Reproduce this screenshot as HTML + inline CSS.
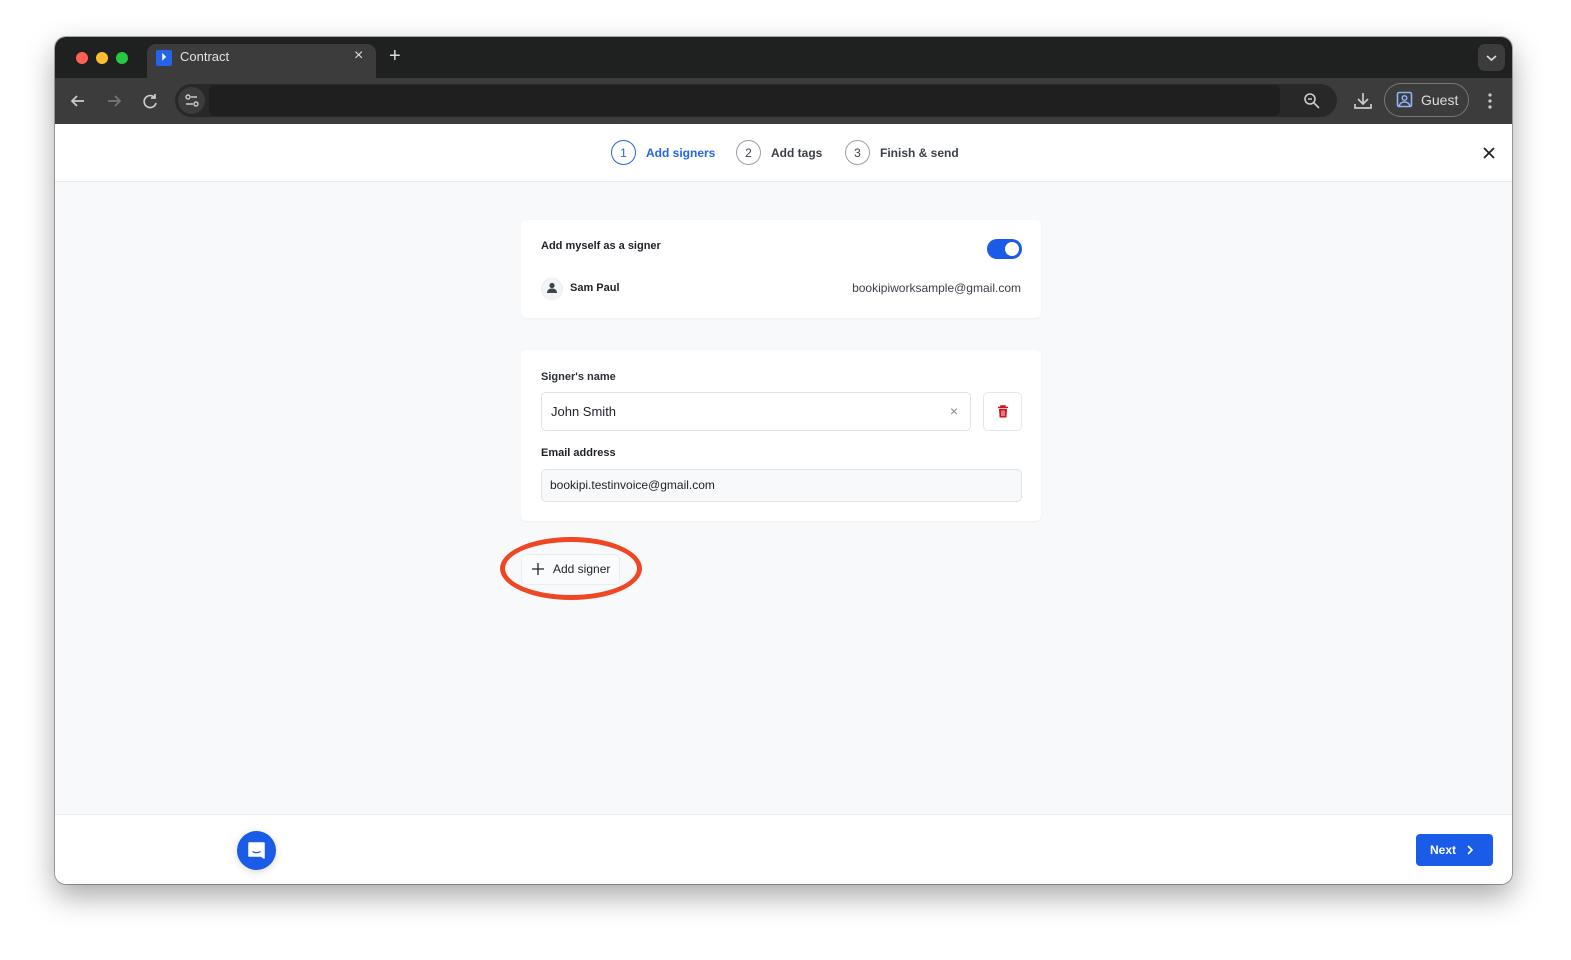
<!DOCTYPE html>
<html><head><meta charset="utf-8"><style>
*{box-sizing:border-box;margin:0;padding:0}
body{width:1571px;height:960px;background:#fff;font-family:"Liberation Sans",Arial,sans-serif;position:relative;overflow:hidden}
.win{position:absolute;left:55px;top:37px;width:1457px;height:847px;border-radius:11px;overflow:hidden;background:#f8f9fb;box-shadow:0 12px 30px rgba(0,0,0,.35),0 0 0 1px rgba(0,0,0,.3)}
.tabs{position:absolute;left:0;top:0;width:100%;height:41px;background:#1f2020}
.dot{position:absolute;top:15px;width:12px;height:12px;border-radius:50%}
.tab{position:absolute;left:92px;top:7px;width:229px;height:36px;background:#3c3c3c;border-radius:9px 9px 0 0}
.tool{position:absolute;left:0;top:41px;width:100%;height:46px;background:#3c3c3c}
.addr{position:absolute;left:120px;top:6px;width:1162px;height:33px;border-radius:17px;background:#282828}
.addr .in{position:absolute;left:34px;top:1px;right:57px;height:31px;background:#1f1f1f;border-radius:6px}
.content{position:absolute;left:0;top:87px;width:100%;height:760px}
.hdr{position:absolute;left:0;top:0;width:100%;height:58px;background:#fff;border-bottom:1px solid #ebedf0}
.step{position:absolute;top:16px;display:flex;align-items:center;font-size:12px;font-weight:bold;color:#3a3f47}
.step .c{width:25px;height:25px;border:1px solid #9aa0a8;border-radius:50%;display:flex;align-items:center;justify-content:center;margin-right:10px;font-size:12px;font-weight:normal}
.card{position:absolute;left:466px;width:520px;background:#fff;border-radius:6px;box-shadow:0 1px 2px rgba(0,0,0,.04)}
.lbl{position:absolute;font-size:11px;font-weight:bold;color:#1d2127}
.foot{position:absolute;left:0;top:690px;width:100%;height:70px;background:#fff;border-top:1px solid #eceef1}
</style></head><body>
<div class="win">
 <div class="tabs">
  <div class="dot" style="left:21px;background:#fe5f57"></div>
  <div class="dot" style="left:41px;background:#febc2e"></div>
  <div class="dot" style="left:61px;background:#28c840"></div>
  <div class="tab">
   <div style="position:absolute;left:9px;top:6px;width:16px;height:16px;background:#2563eb;border-radius:2px;color:#fff;font-size:10px;font-weight:bold;text-align:center;line-height:16px">&#x1F782;</div>
   <div style="position:absolute;left:33px;top:5px;color:#e3e3e3;font-size:13px">Contract</div>
   <div style="position:absolute;left:207px;top:3px;color:#ddd;font-size:16px">×</div>
  </div>
  <div style="position:absolute;left:334px;top:8px;color:#ddd;font-size:20px">+</div>
  <div style="position:absolute;left:1423px;top:7px;width:27px;height:27px;border-radius:7px;background:#3c3c3c"><svg width="27" height="27"><path d="M9 12l4.5 4 4.5-4" stroke="#ddd" stroke-width="1.6" fill="none"/></svg></div>
 </div>
 <div class="tool">
  <svg style="position:absolute;left:12px;top:12px" width="22" height="22"><path d="M17 11H5M10 6l-5 5 5 5" stroke="#ccc" stroke-width="1.7" fill="none"/></svg>
  <svg style="position:absolute;left:48px;top:12px" width="22" height="22"><path d="M5 11h12M12 6l5 5-5 5" stroke="#777" stroke-width="1.7" fill="none"/></svg>
  <svg style="position:absolute;left:84px;top:12px" width="22" height="22"><path d="M16 8a6 6 0 1 0 1 5M16 4v4h-4" stroke="#ccc" stroke-width="1.7" fill="none"/></svg>
  <div class="addr"><div style="position:absolute;left:3px;top:3px;width:27px;height:27px;border-radius:50%;background:#3c3c3c"></div>
   <svg style="position:absolute;left:6px;top:6px" width="22" height="22"><circle cx="7" cy="7" r="2" stroke="#ccc" fill="none" stroke-width="1.4"/><path d="M10 7h6M5 14h7" stroke="#ccc" stroke-width="1.4"/><circle cx="15" cy="14" r="2" stroke="#ccc" fill="none" stroke-width="1.4"/></svg>
   <div class="in"></div>
   <svg style="position:absolute;left:1128px;top:8px" width="18" height="18"><circle cx="7" cy="7" r="5" stroke="#ccc" fill="none" stroke-width="1.6"/><path d="M11 11l5 5M5 7h4" stroke="#ccc" stroke-width="1.6"/></svg>
  </div>
  <svg style="position:absolute;left:1297px;top:12px" width="22" height="22"><path d="M11 3v11M6 9l5 5 5-5M3 14v4h16v-4" stroke="#ccc" stroke-width="1.7" fill="none"/></svg>
  <div style="position:absolute;left:1329px;top:5px;width:85px;height:34px;border:1px solid #777;border-radius:17px;color:#ddd;font-size:14px;line-height:32px;padding-left:36px">Guest</div>
  <svg style="position:absolute;left:1341px;top:13px" width="18" height="18"><rect x="1.5" y="1.5" width="14" height="14" rx="1.5" stroke="#8ab4f8" fill="none" stroke-width="1.6"/><circle cx="8.5" cy="7" r="2.3" stroke="#8ab4f8" fill="none" stroke-width="1.5"/><path d="M3 15c1-3 3-4 5.5-4s4.5 1 5.5 4" stroke="#8ab4f8" fill="none" stroke-width="1.5"/></svg>
  <svg style="position:absolute;left:1428px;top:12px" width="14" height="22"><circle cx="7" cy="5" r="1.6" fill="#ccc"/><circle cx="7" cy="11" r="1.6" fill="#ccc"/><circle cx="7" cy="17" r="1.6" fill="#ccc"/></svg>
 </div>
 <div class="content">
  <div class="hdr">
   <div class="step" style="left:556px;color:#2563eb"><div class="c" style="border-color:#2563eb;color:#2563eb">1</div>Add signers</div>
   <div class="step" style="left:681px"><div class="c">2</div>Add tags</div>
   <div class="step" style="left:790px"><div class="c">3</div>Finish &amp; send</div>
   <svg style="position:absolute;left:1427px;top:22px" width="14" height="14"><path d="M2 2l10 10M12 2L2 12" stroke="#222" stroke-width="1.8"/></svg>
  </div>
  <div class="card" style="top:96px;height:98px">
   <div class="lbl" style="left:20px;top:20px">Add myself as a signer</div>
   <div style="position:absolute;left:466px;top:19px;width:35px;height:20px;border-radius:10px;background:#1a5ce8"><div style="position:absolute;right:3px;top:3px;width:14px;height:14px;border-radius:50%;background:#fff"></div></div>
   <div style="position:absolute;left:20px;top:58px;width:22px;height:22px;border-radius:50%;background:#f3f4f6;border:1px solid #eee"></div>
   <svg style="position:absolute;left:25px;top:62px" width="12" height="12"><circle cx="6" cy="3.5" r="2.6" fill="#3f444c"/><path d="M1 11c0-3 2-4.5 5-4.5s5 1.5 5 4.5z" fill="#3f444c"/></svg>
   <div class="lbl" style="left:49px;top:62px">Sam Paul</div>
   <div style="position:absolute;right:20px;top:61px;font-size:12px;color:#3a3f47">bookipiworksample@gmail.com</div>
  </div>
  <div class="card" style="top:226px;height:171px">
   <div class="lbl" style="left:20px;top:21px;color:#2a2e35">Signer's name</div>
   <div style="position:absolute;left:20px;top:42px;width:430px;height:39px;border:1px solid #dfe2e6;border-radius:5px;font-size:13px;color:#1d2127;line-height:37px;padding-left:9px">John Smith<span style="position:absolute;right:12px;top:0;color:#888;font-size:14px">×</span></div>
   <div style="position:absolute;left:462px;top:42px;width:39px;height:39px;border:1px solid #e5e7ea;border-radius:5px"></div>
   <svg style="position:absolute;left:476px;top:55px" width="12" height="13"><path d="M1 2.5h10M4 2.5V1h4v1.5" stroke="#d0121b" stroke-width="1.6" fill="none"/><path d="M2 4h8l-.6 8.5H2.6z" fill="#d0121b"/><path d="M5 5.5v5.5M7 5.5v5.5" stroke="#fff" stroke-width="0.9"/></svg>
   <div class="lbl" style="left:20px;top:97px">Email address</div>
   <div style="position:absolute;left:20px;top:119px;width:481px;height:33px;border:1px solid #dfe2e6;border-radius:5px;background:#f8f9fb;font-size:12px;color:#1d2127;line-height:31px;padding-left:8px">bookipi.testinvoice@gmail.com</div>
  </div>
  <div style="position:absolute;left:466px;top:430px;width:99px;height:31px;border:1px solid #ebedf0;border-radius:5px;background:#fafbfc;font-size:12px;color:#1d2127;line-height:29px;padding-left:31px">Add signer</div>
  <svg style="position:absolute;left:477px;top:439px" width="12" height="12"><path d="M6 0v12M0 6h12" stroke="#222" stroke-width="1.3"/></svg>
  <div style="position:absolute;left:445px;top:413px;width:142px;height:63px;border:5px solid #ef4623;border-radius:50%"></div>
  <div class="foot">
   <div style="position:absolute;left:182px;top:16px;width:39px;height:39px;border-radius:50%;background:#1a5ce8;box-shadow:0 2px 8px rgba(0,0,0,.15)"></div>
   <svg style="position:absolute;left:192px;top:26px" width="19" height="19"><path d="M2 2h15v15l-3-2H2z" fill="#fff" stroke="#fff" stroke-linejoin="round" stroke-width="1.5"/><path d="M5.5 10.5c2 1.5 6 1.5 8 0" stroke="#1a5ce8" stroke-width="1.3" fill="none"/></svg>
   <div style="position:absolute;left:1361px;top:19px;width:77px;height:32px;border-radius:4px;background:#1a5ce8;color:#fff;font-size:12px;font-weight:bold;line-height:32px;padding-left:14px">Next</div>
   <svg style="position:absolute;left:1410px;top:30px" width="10" height="10"><path d="M3 1l4 4-4 4" stroke="#fff" stroke-width="1.6" fill="none"/></svg>
  </div>
 </div>
</div>
</body></html>
